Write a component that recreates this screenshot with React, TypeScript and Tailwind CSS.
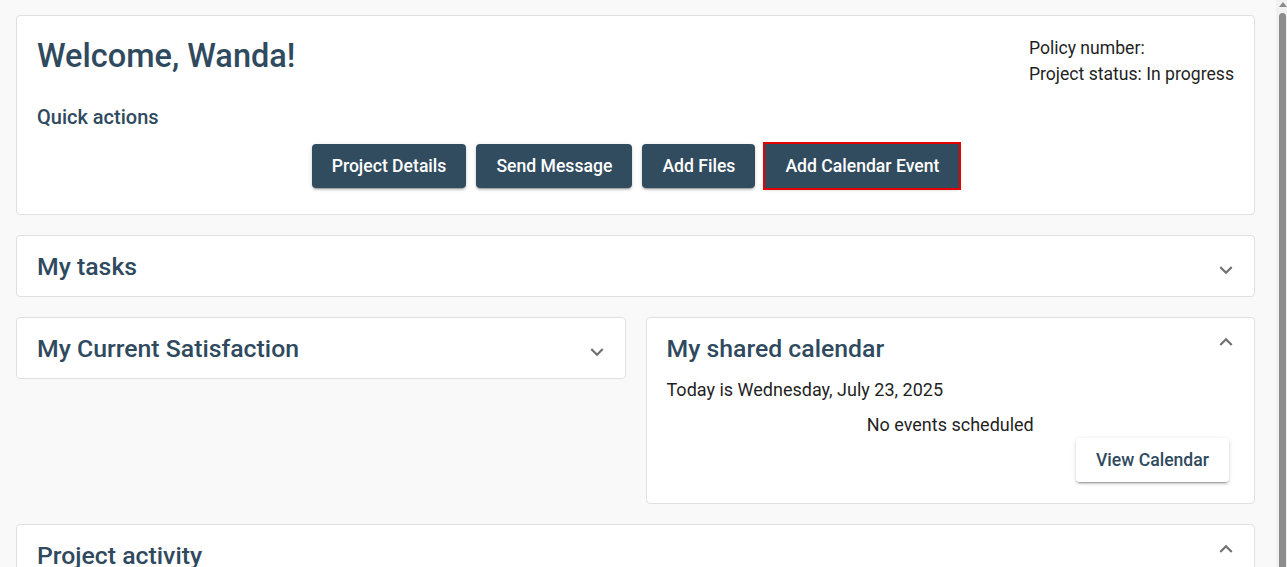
import React from "react";

const quickActions = ["Project Details", "Send Message", "Add Files", "Add Calendar Event"];

const raised =
  "shadow-[0_3px_1px_-2px_rgba(0,0,0,0.2),0_2px_2px_0_rgba(0,0,0,0.14),0_1px_5px_0_rgba(0,0,0,0.12)]";

function Chevron({ up = false }: { up?: boolean }) {
  return (
    <svg viewBox="0 0 24 24" className={`w-[26px] h-[26px] fill-[#707070] ${up ? "rotate-180" : ""}`}>
      <path d="M16.59 8.59 12 13.17 7.41 8.59 6 10l6 6 6-6z" />
    </svg>
  );
}

function CardHeader({ title, open = false }: { title: string; open?: boolean }) {
  return (
    <div className="flex items-start justify-between pl-5 pr-[15px]">
      <h2 className="pt-[16px] pb-[14px] text-[24.8px] leading-[30px] font-medium text-[#2f4a5e]">{title}</h2>
      <div className={open ? "mt-[11px]" : "mt-[21px]"}>
        <Chevron up={open} />
      </div>
    </div>
  );
}

export default function App() {
  return (
    <div className="flex h-screen overflow-hidden bg-[#f9f9f9] font-['Roboto',sans-serif]">
      <div className="flex-1 flex flex-col gap-5 pt-[15px] pb-4 pl-4 pr-[21px]">
        {/* Welcome card */}
        <div className="bg-white rounded border border-[#e0e0e0] px-5 pt-5 pb-[26px]">
          <div className="flex items-start justify-between">
            <h1 className="mt-px text-[32.5px] leading-[38px] font-medium text-[#2f4a5e]">Welcome, Wanda!</h1>
            <div className="-mt-px text-[17.6px] leading-[26px] text-[#1f1f1f]">
              <p>Policy number:</p>
              <p>Project status: In progress</p>
            </div>
          </div>
          <p className="mt-[16px] text-[20px] leading-[28px] font-medium text-[#2f4a5e]">Quick actions</p>
          <div className="mt-[13px] flex justify-center gap-2.5">
            {quickActions.map((label) => (
              <button
                key={label}
                className={`h-11 px-5 rounded bg-[#324c5f] text-white text-[17.6px] font-medium ${raised} ${
                  label === "Add Calendar Event" ? "outline-2 outline-[#e60000] rounded-none" : ""
                }`}
              >
                {label}
              </button>
            ))}
          </div>
        </div>

        {/* My tasks */}
        <div className="bg-white rounded border border-[#e0e0e0]">
          <CardHeader title="My tasks" />
        </div>

        <div className="grid grid-cols-2 gap-5 items-start">
          <div className="bg-white rounded border border-[#e0e0e0]">
            <CardHeader title="My Current Satisfaction" />
          </div>
          <div className="bg-white rounded border border-[#e0e0e0]">
            <CardHeader title="My shared calendar" open />
            <div className="px-5 pb-[21px] text-[18px] text-[#1f1f1f]">
              <p className="leading-[24px]">Today is Wednesday, July 23, 2025</p>
              <p className="mt-[11px] leading-[24px] text-center">No events scheduled</p>
              <div className="mt-px flex justify-end pr-[5px]">
                <button className={`h-11 px-5 rounded bg-white text-[17.6px] font-medium text-[#2f4a5e] ${raised}`}>
                  View Calendar
                </button>
              </div>
            </div>
          </div>
        </div>

        {/* Project activity */}
        <div className="bg-white rounded border border-[#e0e0e0]">
          <CardHeader title="Project activity" open />
        </div>
      </div>

      {/* Scrollbar */}
      <div className="w-[11px] shrink-0 flex flex-col bg-[#f1f1f1]">
        <div className="h-[13px] flex items-start justify-center pt-[2px] pl-[2px]">
          <svg viewBox="0 0 8 5" className="w-2 h-[5px] fill-[#8c8c8c]">
            <path d="M4 0 8 5H0z" />
          </svg>
        </div>
        <div className="flex-1 ml-[3px] mr-px rounded-t-full bg-[#8c8c8c]" />
      </div>
    </div>
  );
}
